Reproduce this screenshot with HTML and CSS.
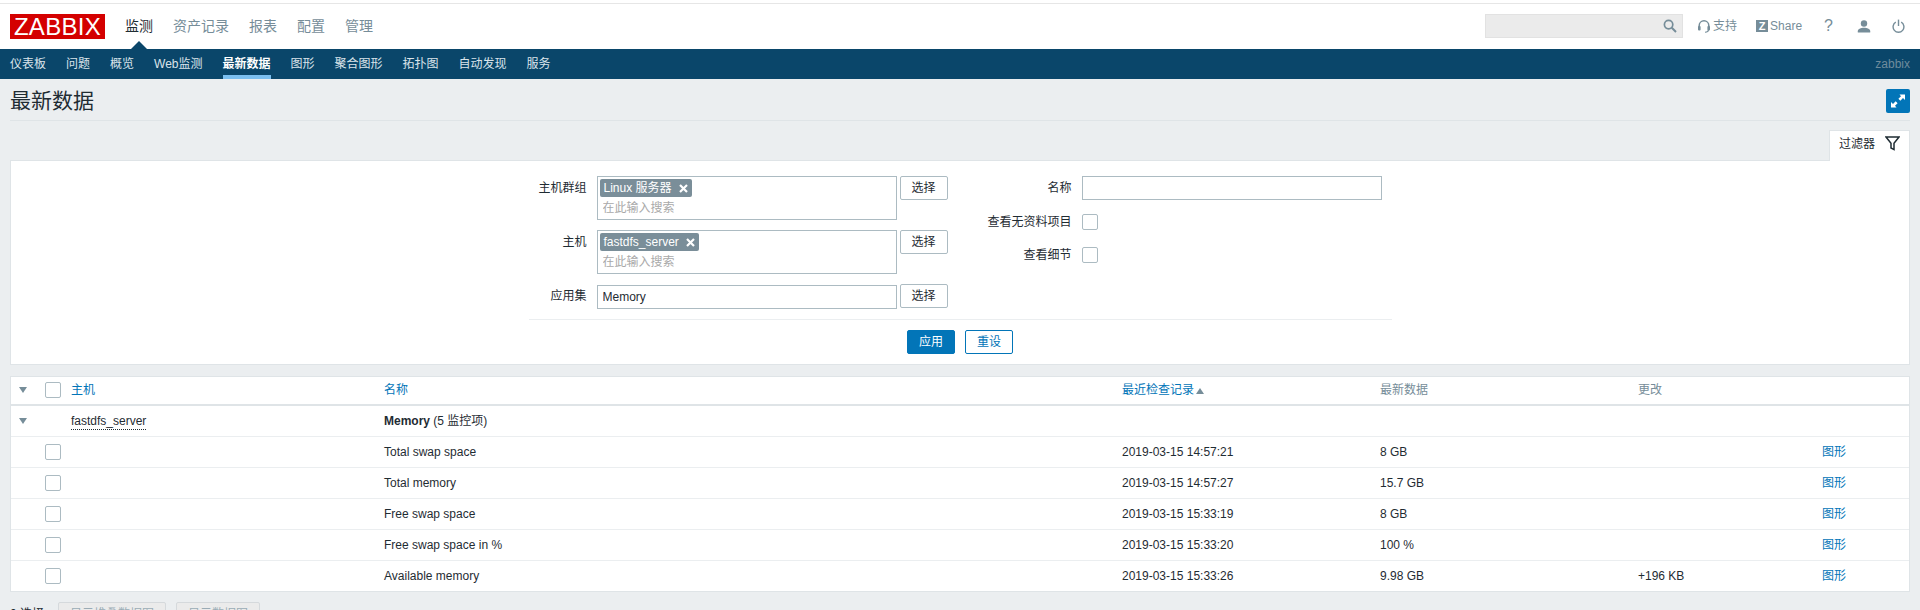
FILE: index.html
```html
<!DOCTYPE html>
<html lang="zh-CN">
<head>
  <meta charset="UTF-8">
  <title>最新数据</title>
  <link rel="stylesheet" href="styles.css">
</head>
<body>

<div class="top-strip"></div>

<header class="main-bar">
  <div class="logo">ZABBIX</div>
  <ul class="main-nav">
    <li class="active">监测</li>
    <li>资产记录</li>
    <li>报表</li>
    <li>配置</li>
    <li>管理</li>
  </ul>
  <div class="top-tools">
    <div class="search-box">
      <svg class="icon" width="14" height="14" viewBox="0 0 14 14"><circle cx="5.6" cy="5.6" r="4.2" fill="none" stroke="#768d99" stroke-width="1.7"/><path d="M8.8 8.8L13 13" stroke="#768d99" stroke-width="2"/></svg>
    </div>
    <span class="tool tool-support">
      <svg class="icon" width="12" height="13" viewBox="0 0 12 13"><path d="M1.2 8V5.6a4.8 4.8 0 0 1 9.6 0V8" fill="none" stroke="#768d99" stroke-width="1.5"/><rect x="0" y="6" width="2.6" height="4.4" rx="1" fill="#768d99"/><rect x="9.4" y="6" width="2.6" height="4.4" rx="1" fill="#768d99"/><path d="M10.4 10c0 1.6-1.4 2.2-3.4 2.2" fill="none" stroke="#768d99" stroke-width="1.1"/></svg>
      支持
    </span>
    <span class="tool tool-share"><span class="share-z">Z</span>Share</span>
    <span class="tool tool-help">?</span>
    <span class="tool tool-user">
      <svg class="icon" width="14" height="13" viewBox="0 0 14 13"><circle cx="7" cy="3.5" r="3.2" fill="#768d99"/><path d="M0.8 12.6v-1.4c0-2.2 3-3.4 6.2-3.4s6.2 1.2 6.2 3.4v1.4z" fill="#768d99"/></svg>
    </span>
    <span class="tool tool-power">
      <svg class="icon" width="13" height="14" viewBox="0 0 13 14"><path d="M3.8 3.2a5.4 5.4 0 1 0 5.4 0" fill="none" stroke="#768d99" stroke-width="1.4"/><path d="M6.5 0.6v6.4" stroke="#768d99" stroke-width="1.4"/></svg>
    </span>
  </div>
</header>

<nav class="sub-bar">
  <ul class="sub-nav">
    <li>仪表板</li>
    <li>问题</li>
    <li>概览</li>
    <li>Web监测</li>
    <li class="active">最新数据</li>
    <li>图形</li>
    <li>聚合图形</li>
    <li>拓扑图</li>
    <li>自动发现</li>
    <li>服务</li>
  </ul>
  <span class="sub-user">zabbix</span>
</nav>

<div class="page-header">
  <h1>最新数据</h1>
  <button class="btn-expand">
    <svg width="16" height="16" viewBox="0 0 16 16"><path d="M9.5 1.5H15V7L13 5L10.3 7.7L8.4 5.8L11 3.3zM6.5 14.5H1V9L3 11L5.7 8.3L7.6 10.2L5 12.7z" fill="#fff"/></svg>
  </button>
</div>

<div class="filter-tabs">
  <div class="filter-tab">
    过滤器
    <svg width="15" height="15" viewBox="0 0 15 15"><path d="M1 1H14L9 7.2V13.6L6 12V7.2z" fill="#fff" stroke="#1f2c33" stroke-width="1.5"/></svg>
  </div>
</div>

<section class="filter-box">
  <form class="filter-form">
    <div class="filter-cols">
      <div class="col-left">
        <label>主机群组</label>
        <div class="multi">
          <span class="tag">Linux 服务器
            <svg width="9" height="9" viewBox="0 0 9 9"><path d="M1 1L8 8M8 1L1 8" stroke="#fff" stroke-width="2.2"/></svg>
          </span>
          <input class="multi-input" placeholder="在此输入搜索">
        </div>
        <button type="button" class="btn">选择</button>

        <label>主机</label>
        <div class="multi">
          <span class="tag">fastdfs_server
            <svg width="9" height="9" viewBox="0 0 9 9"><path d="M1 1L8 8M8 1L1 8" stroke="#fff" stroke-width="2.2"/></svg>
          </span>
          <input class="multi-input" placeholder="在此输入搜索">
        </div>
        <button type="button" class="btn">选择</button>

        <label>应用集</label>
        <input class="text-input text-input-low" value="Memory">
        <button type="button" class="btn">选择</button>
      </div>

      <div class="col-right">
        <label>名称</label>
        <input class="text-input">
        <label>查看无资料项目</label>
        <input type="checkbox" class="check">
        <label>查看细节</label>
        <input type="checkbox" class="check">
      </div>
    </div>
    <div class="filter-actions">
      <button type="button" class="btn btn-primary">应用</button>
      <button type="button" class="btn btn-outline">重设</button>
    </div>
  </form>
</section>

<section class="data-box">
  <table class="data-table">
    <colgroup>
      <col class="c-toggle"><col class="c-check"><col class="c-host"><col class="c-name">
      <col class="c-time"><col class="c-value"><col class="c-change"><col class="c-graph">
    </colgroup>
    <thead>
      <tr>
        <th><span class="caret"></span></th>
        <th><input type="checkbox" class="check"></th>
        <th><a>主机</a></th>
        <th><a>名称</a></th>
        <th><a>最近检查记录</a><span class="sort-up"></span></th>
        <th class="muted">最新数据</th>
        <th class="muted">更改</th>
        <th></th>
      </tr>
    </thead>
    <tbody>
      <tr>
        <td><span class="caret"></span></td>
        <td></td>
        <td><span class="host-link">fastdfs_server</span></td>
        <td><strong>Memory</strong> (5 监控项)</td>
        <td></td><td></td><td></td><td></td>
      </tr>
      <tr>
        <td></td><td><input type="checkbox" class="check"></td><td></td>
        <td>Total swap space</td><td>2019-03-15 14:57:21</td><td>8 GB</td><td></td><td><a>图形</a></td>
      </tr>
      <tr>
        <td></td><td><input type="checkbox" class="check"></td><td></td>
        <td>Total memory</td><td>2019-03-15 14:57:27</td><td>15.7 GB</td><td></td><td><a>图形</a></td>
      </tr>
      <tr>
        <td></td><td><input type="checkbox" class="check"></td><td></td>
        <td>Free swap space</td><td>2019-03-15 15:33:19</td><td>8 GB</td><td></td><td><a>图形</a></td>
      </tr>
      <tr>
        <td></td><td><input type="checkbox" class="check"></td><td></td>
        <td>Free swap space in %</td><td>2019-03-15 15:33:20</td><td>100 %</td><td></td><td><a>图形</a></td>
      </tr>
      <tr>
        <td></td><td><input type="checkbox" class="check"></td><td></td>
        <td>Available memory</td><td>2019-03-15 15:33:26</td><td>9.98 GB</td><td>+196 KB</td><td><a>图形</a></td>
      </tr>
    </tbody>
  </table>
</section>

<div class="mass-actions">
  <span class="selected-count">0 选择</span>
  <button type="button" class="btn btn-disabled">显示堆叠数据图</button>
  <button type="button" class="btn btn-disabled">显示数据图</button>
</div>

</body>
</html>
```

FILE: styles.css
```css
html {
  overflow: hidden;
}
body {
  margin: 0;
  height: 610px;
  overflow: hidden;
  background-color: #ebeef0;
  color: #1f2c33;
  font-family: "Liberation Sans", "Noto Sans CJK SC", sans-serif;
  font-size: 12px;
  line-height: 14px;
}
ul {
  list-style: none;
  margin: 0;
  padding: 0;
}
a {
  color: #0275b8;
}
.icon {
  display: block;
}

/* top bars */
.top-strip {
  height: 3px;
  background-color: #fff;
  border-bottom: 1px solid #e6e6e6;
}
.main-bar {
  display: flex;
  height: 45px;
  padding: 10px 10px 0;
  box-sizing: border-box;
  background-color: #fff;
}
.logo {
  width: 95px;
  height: 25px;
  line-height: 26px;
  text-align: center;
  background-color: #d40000;
  color: #fff;
  font-size: 24px;
  letter-spacing: 0.3px;
}
.main-nav {
  display: flex;
  gap: 20px;
  margin-left: 20px;
  font-size: 14px;
  line-height: 25px;
  color: #768d99;
}
.main-nav .active {
  position: relative;
  color: #1f2c33;
}
.main-nav .active::after {
  content: "";
  position: absolute;
  left: 6px;
  top: 27px;
  border-left: 8px solid transparent;
  border-right: 8px solid transparent;
  border-bottom: 8px solid #0a466a;
}
.top-tools {
  display: flex;
  align-items: center;
  height: 24px;
  margin-left: auto;
  color: #768d99;
}
.search-box {
  display: flex;
  align-items: center;
  justify-content: flex-end;
  width: 198px;
  height: 24px;
  padding-right: 5px;
  box-sizing: border-box;
  background-color: #ebebeb;
  border: 1px solid #e2e2e2;
}
.tool {
  display: flex;
  align-items: center;
}
.tool-support {
  gap: 3px;
  margin-left: 15px;
}
.tool-share {
  gap: 2px;
  margin-left: 19px;
}
.share-z {
  width: 12px;
  height: 12px;
  line-height: 12px;
  text-align: center;
  background-color: #768d99;
  color: #fff;
  font-size: 11px;
  font-weight: bold;
}
.tool-help {
  margin-left: 22px;
  font-size: 16px;
}
.tool-user {
  margin-left: 24px;
}
.tool-power {
  margin-left: 21px;
  margin-right: 5px;
}

.sub-bar {
  display: flex;
  justify-content: space-between;
  height: 30px;
  padding: 0 10px;
  background-color: #0a466a;
  line-height: 30px;
}
.sub-nav {
  display: flex;
  gap: 20px;
  color: #dbe4ea;
}
.sub-nav li {
  height: 30px;
  box-sizing: border-box;
}
.sub-nav .active {
  color: #fff;
  font-weight: bold;
  border-bottom: 4px solid #7bbff0;
}
.sub-user {
  color: #6f8c9d;
}

/* page title */
.page-header {
  display: flex;
  align-items: center;
  justify-content: space-between;
  height: 38px;
  margin: 0 10px;
  padding-top: 3px;
  border-bottom: 1px solid #dfe4e7;
}
.page-header h1 {
  margin: 0;
  font-size: 21px;
  line-height: 24px;
  font-weight: normal;
}
.btn-expand {
  display: flex;
  align-items: center;
  justify-content: center;
  width: 24px;
  height: 24px;
  padding: 0;
  border: 0;
  border-radius: 2px;
  background-color: #0275b8;
}

/* filter */
.filter-tabs {
  display: flex;
  justify-content: flex-end;
  margin: 9px 10px -1px;
}
.filter-tab {
  position: relative;
  z-index: 1;
  display: flex;
  align-items: center;
  gap: 10px;
  width: 81px;
  height: 31px;
  padding: 0 0 5px 9px;
  box-sizing: border-box;
  background-color: #fff;
  border: 1px solid #dfe4e7;
  border-bottom: 0;
}
.filter-box {
  display: flex;
  justify-content: center;
  height: 205px;
  margin: 0 10px;
  padding-top: 15px;
  box-sizing: border-box;
  background-color: #fff;
  border: 1px solid #dfe4e7;
}
.filter-form {
  width: 863px;
}
.filter-cols {
  display: flex;
  height: 143px;
  border-bottom: 1px solid #ebeef0;
}
.col-left {
  display: grid;
  grid-template-columns: 58px 300px 48px;
  grid-template-rows: 44px 44px 24px;
  column-gap: 10px;
  row-gap: 10px;
  align-items: start;
  width: 429px;
}
.col-left .btn {
  margin-left: -7px;
}
.col-left label {
  line-height: 24px;
  text-align: right;
}
.col-right {
  display: grid;
  grid-template-columns: 114px 300px;
  grid-template-rows: 24px 23px 24px;
  column-gap: 10px;
  row-gap: 10px;
  align-items: center;
  height: 100px;
}
.col-right label {
  text-align: right;
}
.text-input {
  width: 300px;
  height: 24px;
  padding: 0 5px;
  box-sizing: border-box;
  background-color: #fff;
  border: 1px solid #acbbc2;
  border-radius: 0;
  color: #1f2c33;
  font: inherit;
  outline: none;
}
.text-input-low {
  margin-top: 1px;
}
.multi {
  height: 44px;
  padding: 2px;
  box-sizing: border-box;
  border: 1px solid #acbbc2;
}
.tag {
  display: flex;
  align-items: center;
  gap: 7px;
  width: fit-content;
  height: 18px;
  padding: 0 4px;
  background-color: #7a8e99;
  border-radius: 2px;
  color: #fff;
}
.multi-input {
  display: block;
  width: 280px;
  height: 20px;
  margin-top: 1px;
  padding: 0 0 0 3px;
  border: 0;
  outline: none;
  font: inherit;
}
.multi-input::placeholder {
  color: #a9a9a9;
}
.check {
  appearance: none;
  display: block;
  width: 16px;
  height: 16px;
  margin: 0;
  background-color: #fff;
  border: 1px solid #acbbc2;
  border-radius: 2px;
}
.btn {
  width: 48px;
  height: 24px;
  padding: 0;
  background-color: #fff;
  border: 1px solid #acbbc2;
  border-radius: 2px;
  color: #1f2c33;
  font: inherit;
}
.filter-actions {
  display: flex;
  justify-content: center;
  gap: 10px;
  padding-top: 10px;
}
.btn-primary {
  background-color: #0275b8;
  border-color: #0275b8;
  color: #fff;
}
.btn-outline {
  border-color: #0275b8;
  color: #0275b8;
}

/* data table */
.data-box {
  margin: 11px 10px 0;
  background-color: #fff;
  border: 1px solid #dfe4e7;
}
.data-table {
  width: 100%;
  table-layout: fixed;
  border-collapse: separate;
  border-spacing: 0;
}
.c-toggle { width: 29px; }
.c-check { width: 26px; }
.c-host { width: 313px; }
.c-name { width: 738px; }
.c-time { width: 258px; }
.c-value { width: 258px; }
.c-change { width: 184px; }
.data-table th,
.data-table td {
  padding: 0 5px;
  box-sizing: border-box;
  text-align: left;
  font-weight: normal;
}
.data-table th {
  height: 29px;
  padding-bottom: 2px;
  border-bottom: 2px solid #dfe4e7;
}
.data-table td {
  height: 31px;
  border-bottom: 1px solid #ebeef0;
}
.data-table tr:last-child td {
  height: 30px;
  border-bottom: 0;
}
.muted {
  color: #768d99;
}
.caret {
  display: block;
  width: 0;
  margin-left: 3px;
  border-left: 4px solid transparent;
  border-right: 4px solid transparent;
  border-top: 6px solid #768d99;
}
.sort-up {
  display: inline-block;
  margin-left: 2px;
  border-left: 4px solid transparent;
  border-right: 4px solid transparent;
  border-bottom: 6px solid #768d99;
}
.host-link {
  padding-bottom: 1px;
  border-bottom: 1px dotted #1f2c33;
}

/* buttons under the table */
.mass-actions {
  display: flex;
  align-items: center;
  gap: 14px;
  margin: 10px 0 0 10px;
}
.selected-count {
  width: 34px;
}
.btn-disabled {
  width: 108px;
  background-color: #ebebeb;
  border-color: #d5d9dc;
  color: #9aabb5;
}
.btn-disabled + .btn-disabled {
  width: 84px;
  margin-left: -4px;
}
```
